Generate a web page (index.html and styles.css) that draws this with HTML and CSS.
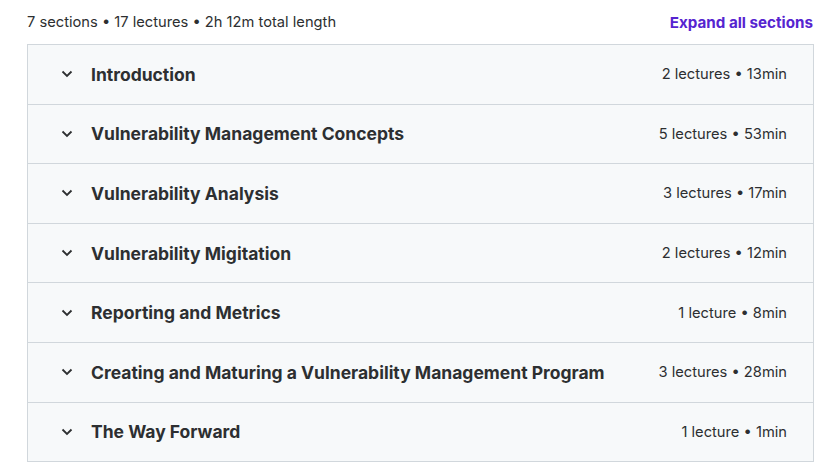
FILE: index.html
```html
<!DOCTYPE html>
<html lang="en">
<head>
    <meta charset="UTF-8">
    <meta name="viewport" content="width=device-width, initial-scale=1.0">
    <title>Course content</title>

    <link rel="stylesheet" href="styles.css">
</head>
<body>
    <div class="curriculum">
        <div class="summary">
            <span>7 sections • 17 lectures • 2h 12m total length</span>
            <button class="expand-all">Expand all sections</button>
        </div>

        <div class="sections">
            <div class="section">
                <svg class="chevron" viewBox="0 0 12 8"><path d="M1.5 1.5 6 6l4.5-4.5"/></svg>
                <span class="title">Introduction</span>
                <span class="meta">2 lectures • 13min</span>
            </div>
            <div class="section">
                <svg class="chevron" viewBox="0 0 12 8"><path d="M1.5 1.5 6 6l4.5-4.5"/></svg>
                <span class="title">Vulnerability Management Concepts</span>
                <span class="meta">5 lectures • 53min</span>
            </div>
            <div class="section">
                <svg class="chevron" viewBox="0 0 12 8"><path d="M1.5 1.5 6 6l4.5-4.5"/></svg>
                <span class="title">Vulnerability Analysis</span>
                <span class="meta">3 lectures • 17min</span>
            </div>
            <div class="section">
                <svg class="chevron" viewBox="0 0 12 8"><path d="M1.5 1.5 6 6l4.5-4.5"/></svg>
                <span class="title">Vulnerability Migitation</span>
                <span class="meta">2 lectures • 12min</span>
            </div>
            <div class="section">
                <svg class="chevron" viewBox="0 0 12 8"><path d="M1.5 1.5 6 6l4.5-4.5"/></svg>
                <span class="title">Reporting and Metrics</span>
                <span class="meta">1 lecture • 8min</span>
            </div>
            <div class="section">
                <svg class="chevron" viewBox="0 0 12 8"><path d="M1.5 1.5 6 6l4.5-4.5"/></svg>
                <span class="title">Creating and Maturing a Vulnerability Management Program</span>
                <span class="meta">3 lectures • 28min</span>
            </div>
            <div class="section">
                <svg class="chevron" viewBox="0 0 12 8"><path d="M1.5 1.5 6 6l4.5-4.5"/></svg>
                <span class="title">The Way Forward</span>
                <span class="meta">1 lecture • 1min</span>
            </div>
        </div>
    </div>
</body>
</html>
```

FILE: styles.css
```css
/* General styling */
body, html {
    margin: 0;
    padding: 0;
    background: #fff;
    font-family: Inter, "Noto Sans", sans-serif;
    color: #2d2f31;
}

.curriculum {
    padding: 12px 20px 0 27px;
}

/* Summary line above the list */
.summary {
    display: flex;
    justify-content: space-between;
    align-items: center;
    height: 20px;
    font-size: 14.7px;
    margin-bottom: 12px;
}

.expand-all {
    border: none;
    background: none;
    padding: 0;
    font-family: inherit;
    font-size: 15.2px;
    font-weight: 700;
    color: #5624d0;
    cursor: pointer;
}

/* Section rows */
.sections {
    width: 785px;
    border: 1px solid #d1d7dc;
}

.section {
    display: flex;
    align-items: center;
    height: 58.6px;
    padding: 0 26px 0 33px;
    background: #f7f9fa;
    border-top: 1px solid #d1d7dc;
}

.section:first-child {
    border-top: none;
}

.chevron {
    width: 12px;
    height: 8px;
    margin-right: 18px;
    fill: none;
    stroke: #2d2f31;
    stroke-width: 1.8;
}

.title {
    flex: 1;
    font-size: 17.5px;
    font-weight: 700;
}

.meta {
    font-size: 14.7px;
}
```
